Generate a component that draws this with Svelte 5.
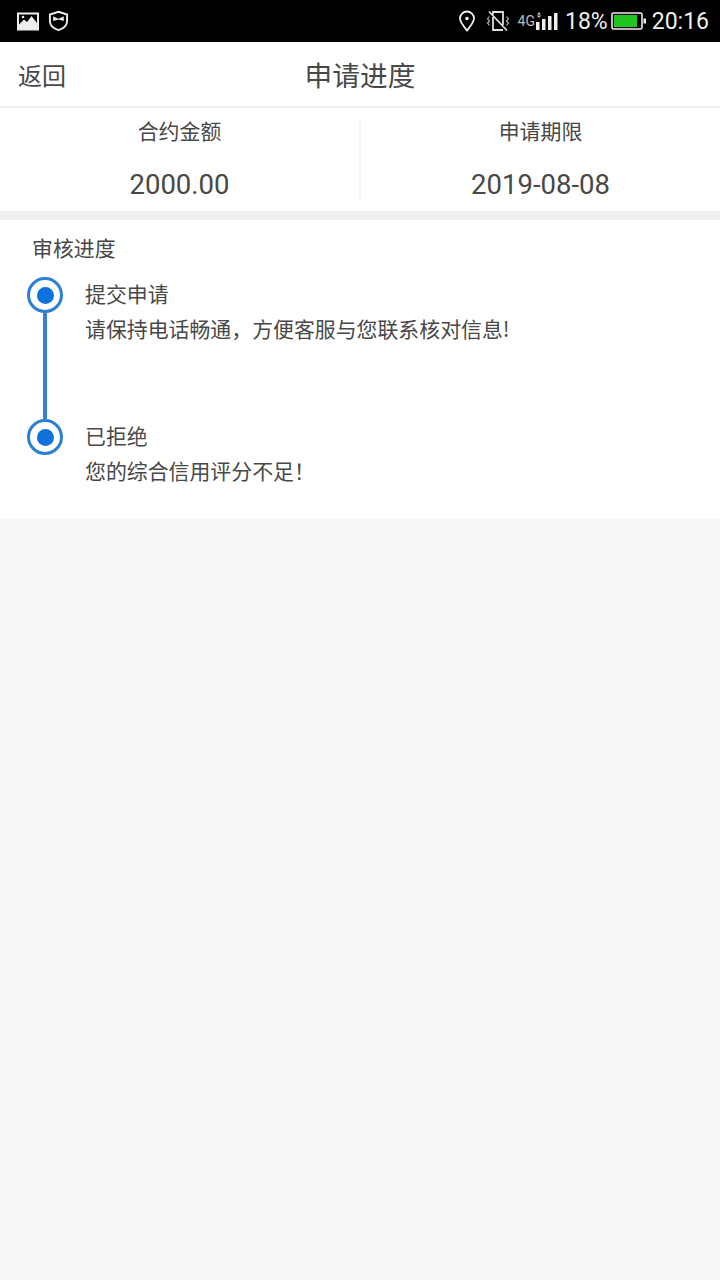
<script>
  const summary = [
    { label: '合约金额', value: '2000.00' },
    { label: '申请期限', value: '2019-08-08' }
  ]
  const steps = [
    { title: '提交申请', note: '请保持电话畅通，方便客服与您联系核对信息!' },
    { title: '已拒绝', note: '您的综合信用评分不足！' }
  ]
</script>

<div class="page">
  <div class="status-bar">
    <div class="status-left">
      <svg width="23" height="20" viewBox="0 0 23 20">
        <path fill="#eee" fill-rule="evenodd" d="M0 1.500h22v18H0z M2 3.500v10l5-5 3 2.500 4.500-6 5.500 7v-8.500z" />
        <circle cx="6" cy="6" r="1.300" fill="#eee" />
      </svg>
      <svg width="21" height="22" viewBox="0 0 22 22">
        <path fill="none" stroke="#eee" stroke-width="2" d="M11 1.300l9 2.900v6.800c0 4.500-4 8-9 9.500-5-1.500-9-5-9-9.500V4.200z" />
        <path fill="#eee" d="M5.500 6l4.500 2.300h2L16.500 6v5L12 9.700h-2L5.500 11z" />
      </svg>
    </div>
    <div class="status-right">
      <svg width="18" height="22" viewBox="0 0 18 22">
        <path fill="none" stroke="#eee" stroke-width="1.800" d="M9 20.500c-4-5-7-8.500-7-12a7 7 0 0 1 14 0c0 3.500-3 7-7 12z" />
        <circle cx="9" cy="8.500" r="1.800" fill="#eee" />
      </svg>
      <svg class="vibrate" width="24" height="22" viewBox="0 0 24 22">
        <path fill="none" stroke="#ddd" stroke-width="1.800" d="M7 4.500V2h10v13M17 20H7V7M3 1.500l18 19" />
        <path fill="none" stroke="#bbb" stroke-width="1.100" d="M3.500 6.500l-2 2.200 2 2.200-2 2.200 2 2.200M20.500 6.500l2 2.200-2 2.200 2 2.200-2 2.200" />
      </svg>
      <span class="net">4G</span>
      <svg class="signal" width="23" height="20" viewBox="0 0 23 20">
        <path fill="#eee" d="M1 11h3.500v8H1zM7 8h3.500v11H7zM13 5h3.500v14H13zM19 2h3.500v17H19z" />
        <path fill="#ccc" d="M4 1l2 2.500H2zM2 4.500h4L4 7z" />
      </svg>
      <span class="pct">18%</span>
      <svg class="battery" width="36" height="20" viewBox="0 0 36 20">
        <rect x="1" y="2" width="30" height="16" rx="1.500" fill="none" stroke="#eee" stroke-width="1.600" />
        <rect x="3" y="4" width="23" height="12" fill="#1fc61f" />
        <path fill="#eee" d="M32.500 7.500H35v5h-2.500z" />
      </svg>
      <span class="clock">20:16</span>
    </div>
  </div>

  <header class="nav">
    <span class="back">返回</span>
    <h1>申请进度</h1>
  </header>

  <section class="summary">
    {#each summary as item}
      <div class="cell">
        <div class="cell-label">{item.label}</div>
        <div class="cell-value">{item.value}</div>
      </div>
    {/each}
  </section>

  <section class="progress">
    <div class="progress-title">审核进度</div>
    <div class="steps">
      {#each steps as step, i}
        <div class="step">
          <div class="rail">
            <span class="dot"></span>
            {#if i < steps.length - 1}
              <span class="line"></span>
            {/if}
          </div>
          <div class="step-text">
            <div>{step.title}</div>
            <div>{step.note}</div>
          </div>
        </div>
      {/each}
    </div>
  </section>
</div>

<style>
:global(body) {
  margin: 0;
  background: #f7f7f7;
}

.page {
  display: flex;
  flex-direction: column;
  min-height: 1280px;
  font-family: "Noto Sans CJK SC", "Noto Sans", sans-serif;
  color: #484848;
  background: #f7f7f7;
}

.status-bar {
  display: flex;
  justify-content: space-between;
  align-items: center;
  height: 42px;
  background: #000;
  color: #eee;
  box-sizing: border-box;
  padding: 0 11px 0 17px;
  font-family: Roboto, sans-serif;
}

.status-left {
  display: flex;
  align-items: center;
  gap: 8px;
}

.status-right {
  display: flex;
  align-items: center;
}

.vibrate {
  margin-left: 10px;
}

.net {
  margin-left: 8px;
  font-size: 14px;
  color: #bbb;
}

.pct {
  margin-left: 7px;
  font-size: 23px;
}

.battery {
  margin-left: 3px;
}

.clock {
  margin-left: 5px;
  font-size: 23px;
}

.nav {
  position: relative;
  display: flex;
  align-items: center;
  justify-content: center;
  height: 66px;
  box-sizing: border-box;
  background: #fff;
  border-bottom: 2px solid #eee;
}

.back {
  position: absolute;
  left: 18px;
  font-size: 24px;
}

h1 {
  margin: 0;
  font-size: 27.700px;
  font-weight: 400;
}

.summary {
  display: flex;
  height: 112px;
  box-sizing: border-box;
  padding: 9px 0;
  background: #fff;
  border-bottom: 9px solid #f0f0f0;
}

.cell {
  flex: 1;
  display: flex;
  flex-direction: column;
  align-items: center;
  height: 85px;
}

.cell + .cell {
  border-left: 2px solid #f7f7f7;
}

.cell-label {
  font-size: 20.900px;
  line-height: 26px;
}

.cell-value {
  margin-top: 24px;
  font-family: Roboto, sans-serif;
  font-size: 27.500px;
  line-height: 36px;
}

.progress {
  background: #fff;
  height: 299px;
  box-sizing: border-box;
  padding: 12px 0 0 26px;
}

.progress-title {
  margin-left: 6px;
  font-size: 20.900px;
  line-height: 30px;
}

.steps {
  margin-top: 15px;
}

.step {
  display: flex;
  height: 142px;
}

.rail {
  display: flex;
  flex-direction: column;
  align-items: center;
  width: 38px;
}

.dot {
  position: relative;
  flex: none;
  width: 36px;
  height: 36px;
  box-sizing: border-box;
  border: 3px solid #2b7fd6;
  border-radius: 50%;
}

.dot::after {
  content: "";
  position: absolute;
  inset: 6.500px;
  border-radius: 50%;
  background: #0f71dc;
}

.line {
  flex: 1;
  width: 4px;
  background: #3a80d8;
}

.step-text {
  margin-top: -1px;
  margin-left: 21px;
  font-size: 20.900px;
  line-height: 35px;
}
</style>
